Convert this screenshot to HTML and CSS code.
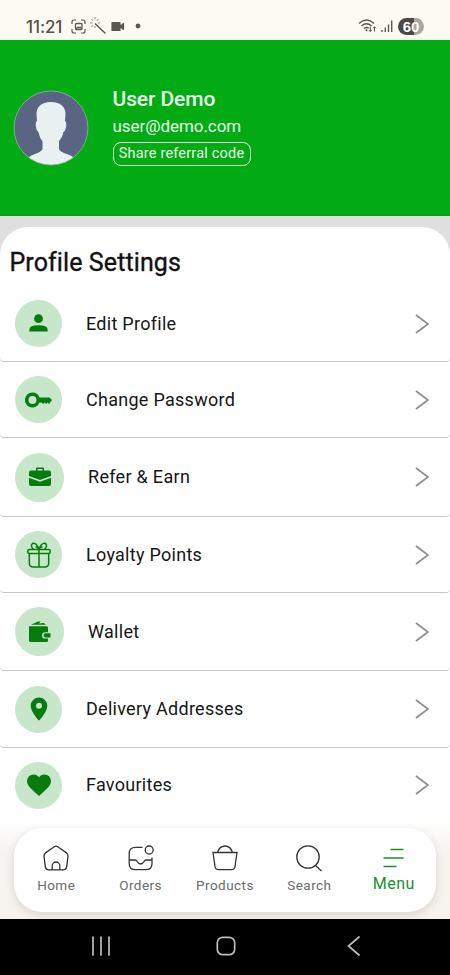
FILE: index.html
```html
<!DOCTYPE html>
<html lang="en">
<head>
<meta charset="utf-8">
<title>Profile Settings</title>
<link rel="stylesheet" href="styles.css">
</head>
<body>
<div class="status">
  <span class="time">11:21</span>
  <svg class="status-left" width="76" height="20" viewBox="0 0 76 20" fill="none" stroke="#5b5751" stroke-width="1.2">
    <path d="M1 7V5q0-2 2-2h2M10 3h2q2 0 2 2v2M14 12v2q0 2-2 2h-2M5 16H3q-2 0-2-2v-2"/>
    <rect x="4.5" y="6.5" width="6.500" height="6" rx="1" stroke-width="1.3"/><path d="M5 12l2-2 1 1 1-1 2 2" />
    <path d="M24 6.500L34.500 16.500" stroke-width="1.500"/>
    <path d="M24 0v2.500M20.500 2l1.500 2M27.500 2L26 4M19 6h2.500M20.500 10l1.500-2M27 6h2M24 9v2" stroke-width=".9" stroke="#8c877f"/>
    <path d="M41 5.500h8v8h-8zM49.500 9L52.500 6.500v6L49.500 10z" fill="#5b5751" stroke-linejoin="round"/>
    <circle cx="67" cy="9" r="2.400" fill="#5b5751" stroke="none"/>
  </svg>
  <svg class="status-right" width="36" height="20" viewBox="0 0 36 20" fill="none" stroke="#5b5751" stroke-width="1.400">
    <path d="M1 6.500Q8.500-.5 16 6.500M3.500 9Q8.500 4.500 13.500 9M6 11.500q2.500-2 4.800-.3"/><circle cx="8.500" cy="13.200" r="1" fill="#5b5751" stroke="none"/>
    <path d="M12.300 9.800v4.700m-1.500-1.500l1.500 1.500 1.500-1.500M16.500 14.500V9.800m-1.500 1.500l1.500-1.500 1.500 1.500" stroke-width="1"/>
    <path d="M24 13v2M27.300 10.500V15M30.500 7.500V15M33.700 3.500V15"/>
  </svg>
  <span class="battery">60</span>
</div>
<header class="header">
  <svg class="avatar" width="76" height="76" viewBox="0 0 76 76">
    <defs><clipPath id="disc"><circle cx="38" cy="38" r="37"/></clipPath></defs>
    <g clip-path="url(#disc)">
      <path fill="#596583" d="M0 0h76v76H0z"/>
      <path fill="#e9f0f2" d="M38 12C28 12 23.500 17 23.500 24L24 31Q22 32 23 37Q23.500 41 25.500 42Q27 49 29.500 51V59Q28 62 22 64Q13 67 8 76H68Q63 67 54 64Q47 62 46 59V51Q49 48 50.500 42Q52.500 41 53 37Q54 32 52 31L52.500 24C52.500 17 48 12 38 12Z"/>
    </g>
    <circle cx="38" cy="38" r="37" fill="none" stroke="#8fb79c" stroke-width=".8"/>
  </svg>
  <div class="user">
    <div class="name">User Demo</div>
    <div class="email">user@demo.com</div>
    <div class="share">Share referral code</div>
  </div>
</header>
<main class="page">
  <section class="card">
    <h1>Profile Settings</h1>
    <div class="row"><span class="disc"><svg viewBox="0 0 24 24"><circle cx="12" cy="6.500" r="5"/><path d="M1.500 21v-2Q1.500 14 12 14T22.500 19v2z"/></svg></span><span class="label">Edit Profile</span><svg class="chev" viewBox="0 0 14 20"><path d="M1 1l12 9L1 19"/></svg></div>
    <div class="row"><span class="disc"><svg viewBox="0 0 24 24"><path fill-rule="evenodd" d="M5.500 4.500a7.500 7.500 0 1 0 7 10H14.500l1.500 1.600 1.500-1.600 1.500 1.600 1.500-1.600 1.500 1.400L25 12 22.500 9.500H12.500A7.500 7.500 0 0 0 5.500 4.500zm0 3.500a4 4 0 1 1 0 8 4 4 0 0 1 0-8z"/></svg></span><span class="label">Change Password</span><svg class="chev" viewBox="0 0 14 20"><path d="M1 1l12 9L1 19"/></svg></div>
    <div class="row big r79"><span class="disc"><svg viewBox="0 0 24 24"><path fill-rule="evenodd" d="M8 5.500V3.700Q8 2.500 9.200 2.500h5.600Q16 2.500 16 3.700v1.800h5q2 0 2 2V11l-11 4L1 11V7.500q0-2 2-2zm1.600 0h4.800V4H9.600z"/><path d="M1 12.700l11 4 11-4V19q0 2-2 2H3q-2 0-2-2z"/></svg></span><span class="label">Refer &amp; Earn</span><svg class="chev" viewBox="0 0 14 20"><path d="M1 1l12 9L1 19"/></svg></div>
    <div class="row"><span class="disc"><svg class="line" viewBox="0 0 24 24"><rect x=".8" y="6.500" width="22.400" height="4" rx="1.500"/><path d="M2.300 10.500v9.500q0 4 4 4h11.400q4 0 4-4v-9.500M12 6.500V24M12 6Q9-1 5.500.5 3 3 6.500 6.500M12 6q3-7 6.500-5.500Q21 3 17.500 6.500M12 6.500Q11 4 8.500 4M12 6.500Q13 4 15.500 4"/></svg></span><span class="label">Loyalty Points</span><svg class="chev" viewBox="0 0 14 20"><path d="M1 1l12 9L1 19"/></svg></div>
    <div class="row big r78"><span class="disc"><svg viewBox="0 0 24 24"><path d="M3 4.800L10 1.500h2.500L11 3.600l5-.6 2 1.800zM1.500 6.200H18.500q1.500 0 1.500 1.500v4.500h-2.500q-3.500 0-3.500 3.200t3.500 3.200H20v2q0 1.500-1.500 1.500H2.500Q1 22.100 1 20.600V6.200zM17.500 13.200H22.500v4.200h-5q-2 0-2-2.100t2-2.100z"/></svg></span><span class="label">Wallet</span><svg class="chev" viewBox="0 0 14 20"><path d="M1 1l12 9L1 19"/></svg></div>
    <div class="row r77"><span class="disc"><svg viewBox="0 0 24 24"><path fill-rule="evenodd" d="M12 .5a8.300 8.300 0 0 0-8.300 8.300C3.700 15 12 23.800 12 23.800S20.300 15 20.300 8.800A8.300 8.300 0 0 0 12 .5zm0 5.300a3 3 0 1 1 0 6 3 3 0 0 1 0-6z"/></svg></span><span class="label">Delivery Addresses</span><svg class="chev" viewBox="0 0 14 20"><path d="M1 1l12 9L1 19"/></svg></div>
    <div class="row last"><span class="disc"><svg viewBox="0 0 24 24"><path d="M12 23L9.500 20.800C3 15 0 12 0 7.800A6.500 6.500 0 0 1 6.500 1.500C9 1.500 11 2.700 12 4.300 13 2.700 15 1.500 17.500 1.500A6.500 6.500 0 0 1 24 7.800C24 12 21 15 14.500 20.800z"/></svg></span><span class="label">Favourites</span><svg class="chev" viewBox="0 0 14 20"><path d="M1 1l12 9L1 19"/></svg></div>
  </section>
</main>
<div class="dock">
  <nav class="nav">
    <div class="tab"><svg viewBox="0 0 28 28"><path d="M12.200 2.800q1.800-1.200 3.600 0l8.700 6.100q1.700 1.200 1.500 3.200l-1.300 10.500q-.4 3.200-3.500 3.200H6.800q-3.100 0-3.500-3.200L2 12.100q-.2-2 1.500-3.200zM10.200 25.500v-3.700a3.800 3.800 0 0 1 7.600 0v3.700"/></svg><span>Home</span></div>
    <div class="tab"><svg viewBox="0 0 28 28"><path d="M15.500 3.300H8.500Q2.200 3.300 2.200 9.500v10q0 6.200 6.300 6.200h10.300q6.200 0 6.200-6.200v-6M2.200 16H8q1.500 0 2.200 1.500Q11.500 20 13.600 20T17 17.500Q17.700 16 19.300 16H25"/><circle cx="22.200" cy="6" r="4"/></svg><span>Orders</span></div>
    <div class="tab"><svg viewBox="0 0 28 28"><path d="M2 8.500h24l-2 14q-.5 3.200-3.700 3.200H7.700q-3.200 0-3.700-3.200zM6.500 8.500Q8.500 2 14 2t7.500 6.500"/></svg><span>Products</span></div>
    <div class="tab"><svg viewBox="0 0 28 28"><circle cx="13" cy="13" r="11.200"/><path d="M20.500 21.500l6 5.500"/></svg><span>Search</span></div>
    <div class="tab active"><svg viewBox="0 0 28 28"><path d="M10.500 5.500h13M3.500 14h20M3.500 22.500h13"/></svg><span>Menu</span></div>
  </nav>
</div>
<footer class="keys">
  <svg width="20" height="20" viewBox="0 0 20 20"><path d="M2 1v18M10 1v18M18 1v18"/></svg>
  <svg width="20" height="20" viewBox="0 0 20 20"><rect x="1.300" y="1.300" width="17.400" height="17.400" rx="5.500"/></svg>
  <svg width="20" height="20" viewBox="0 0 20 20"><path d="M15 1L4.500 10 15 19"/></svg>
</footer>
</body>
</html>
```
FILE: styles.css
```css
* { box-sizing: border-box; }
body { margin: 0; width: 450px; height: 975px; overflow: hidden; display: flex; flex-direction: column; background: #fff; font-family: Roboto, sans-serif; }
svg { display: block; flex: none; }
.status { height: 40px; flex: none; background: #fdfaf3; display: flex; align-items: center; padding: 13px 26px 0; color: #55514b; }
.time { width: 38px; font: 500 17px/20px Inter, sans-serif; letter-spacing: -.1px; white-space: nowrap; }
.status-left { margin-left: 7px; }
.status-right { margin-left: auto; }
.battery { width: 26px; height: 17px; margin-left: 4px; border-radius: 9px; background: linear-gradient(90deg, #4c4844 60%, #aaa7a3 60%); color: #fff; font: 700 15px/17px "Liberation Sans", sans-serif; text-align: center; }
.header { height: 176px; flex: none; background: #02aa14; border-bottom: 1px solid #14991f; display: flex; padding: 0 13px; align-items: center; color: #eaffea; }
.user { margin-left: 23.5px; padding-bottom: 5px; display: flex; flex-direction: column; align-items: flex-start; }
.name { font-size: 21px; line-height: 28px; font-weight: 500; letter-spacing: -.1px; }
.email { font-size: 17px; line-height: 24px; letter-spacing: -.05px; margin-top: 1px; }
.share { height: 24px; width: 138px; margin-top: 4px; border: 1.500px solid #d8ffd8; border-radius: 8px; font-size: 14.500px; line-height: 22px; letter-spacing: .2px; text-align: center; white-space: nowrap; }
.page { height: 606px; flex: none; padding-top: 11px; background: #dedfde; }
.card { height: 595px; background: #fff; border-radius: 28px 28px 0 0; }
h1 { margin: 0; height: 59px; padding: 21px 9.5px 0; font-size: 25px; line-height: 29px; font-weight: 400; letter-spacing: .1px; -webkit-text-stroke: .35px #111; color: #111; white-space: nowrap; }
.row { display: flex; align-items: center; height: 76px; padding: 0 21.5px 0 15px; border-bottom: 1px solid #c8c8c8; border-radius: 0 0 4px 4px; }
.r79 { height: 79px; }
.r78 { height: 78px; }
.r77 { height: 77px; }
.last { height: 74px; border: 0; }
.disc { width: 47px; height: 47px; border-radius: 50%; background: #c8e6ca; display: flex; align-items: center; justify-content: center; flex: none; }
.disc svg { width: 24px; height: 24px; fill: #067c0e; overflow: visible; }
.disc .line { fill: none; stroke: #067c0e; stroke-width: 1.500; }
.row:nth-child(2) .disc svg { width: 21px; height: 21px; }
.label { margin-left: 24px; font-size: 18px; line-height: 24px; letter-spacing: .28px; color: #161616; white-space: nowrap; }
.big .disc { width: 49px; height: 49px; }
.big .label { letter-spacing: .3px; }
.chev { width: 14px; height: 20px; margin-left: auto; fill: none; stroke: #8d8d8d; stroke-width: 1.700; }
.dock { height: 97px; flex: none; background: linear-gradient(#fefefe, #f6f4f0 30%, #f6f3ee); padding: 6px 14px 0; }
.nav { height: 84px; display: grid; grid-template-columns: repeat(5, 1fr); background: #fff; border-radius: 28px; box-shadow: 0 3px 10px rgba(0,0,0,.12); }
.tab { display: flex; flex-direction: column; align-items: center; padding-top: 16px; font-size: 13.500px; line-height: 18px; letter-spacing: .45px; color: #6b6b6b; }
.tab svg { width: 28px; height: 28px; fill: none; stroke: #333; stroke-width: 1.300; }
.tab span { margin-top: 4px; }
.active { color: #17922a; font-size: 16px; }
.active svg { stroke: #17922a; stroke-width: 1.600; }
.active span { margin-top: 3px; }
.keys { height: 56px; flex: none; background: #000; display: flex; justify-content: space-between; padding: 17px 86px 0 91px; }
.keys svg { fill: none; stroke: #bdbdbd; stroke-width: 1.700; stroke-linecap: round; }
.keys svg:nth-child(2) { margin-left: -3px; }
```
